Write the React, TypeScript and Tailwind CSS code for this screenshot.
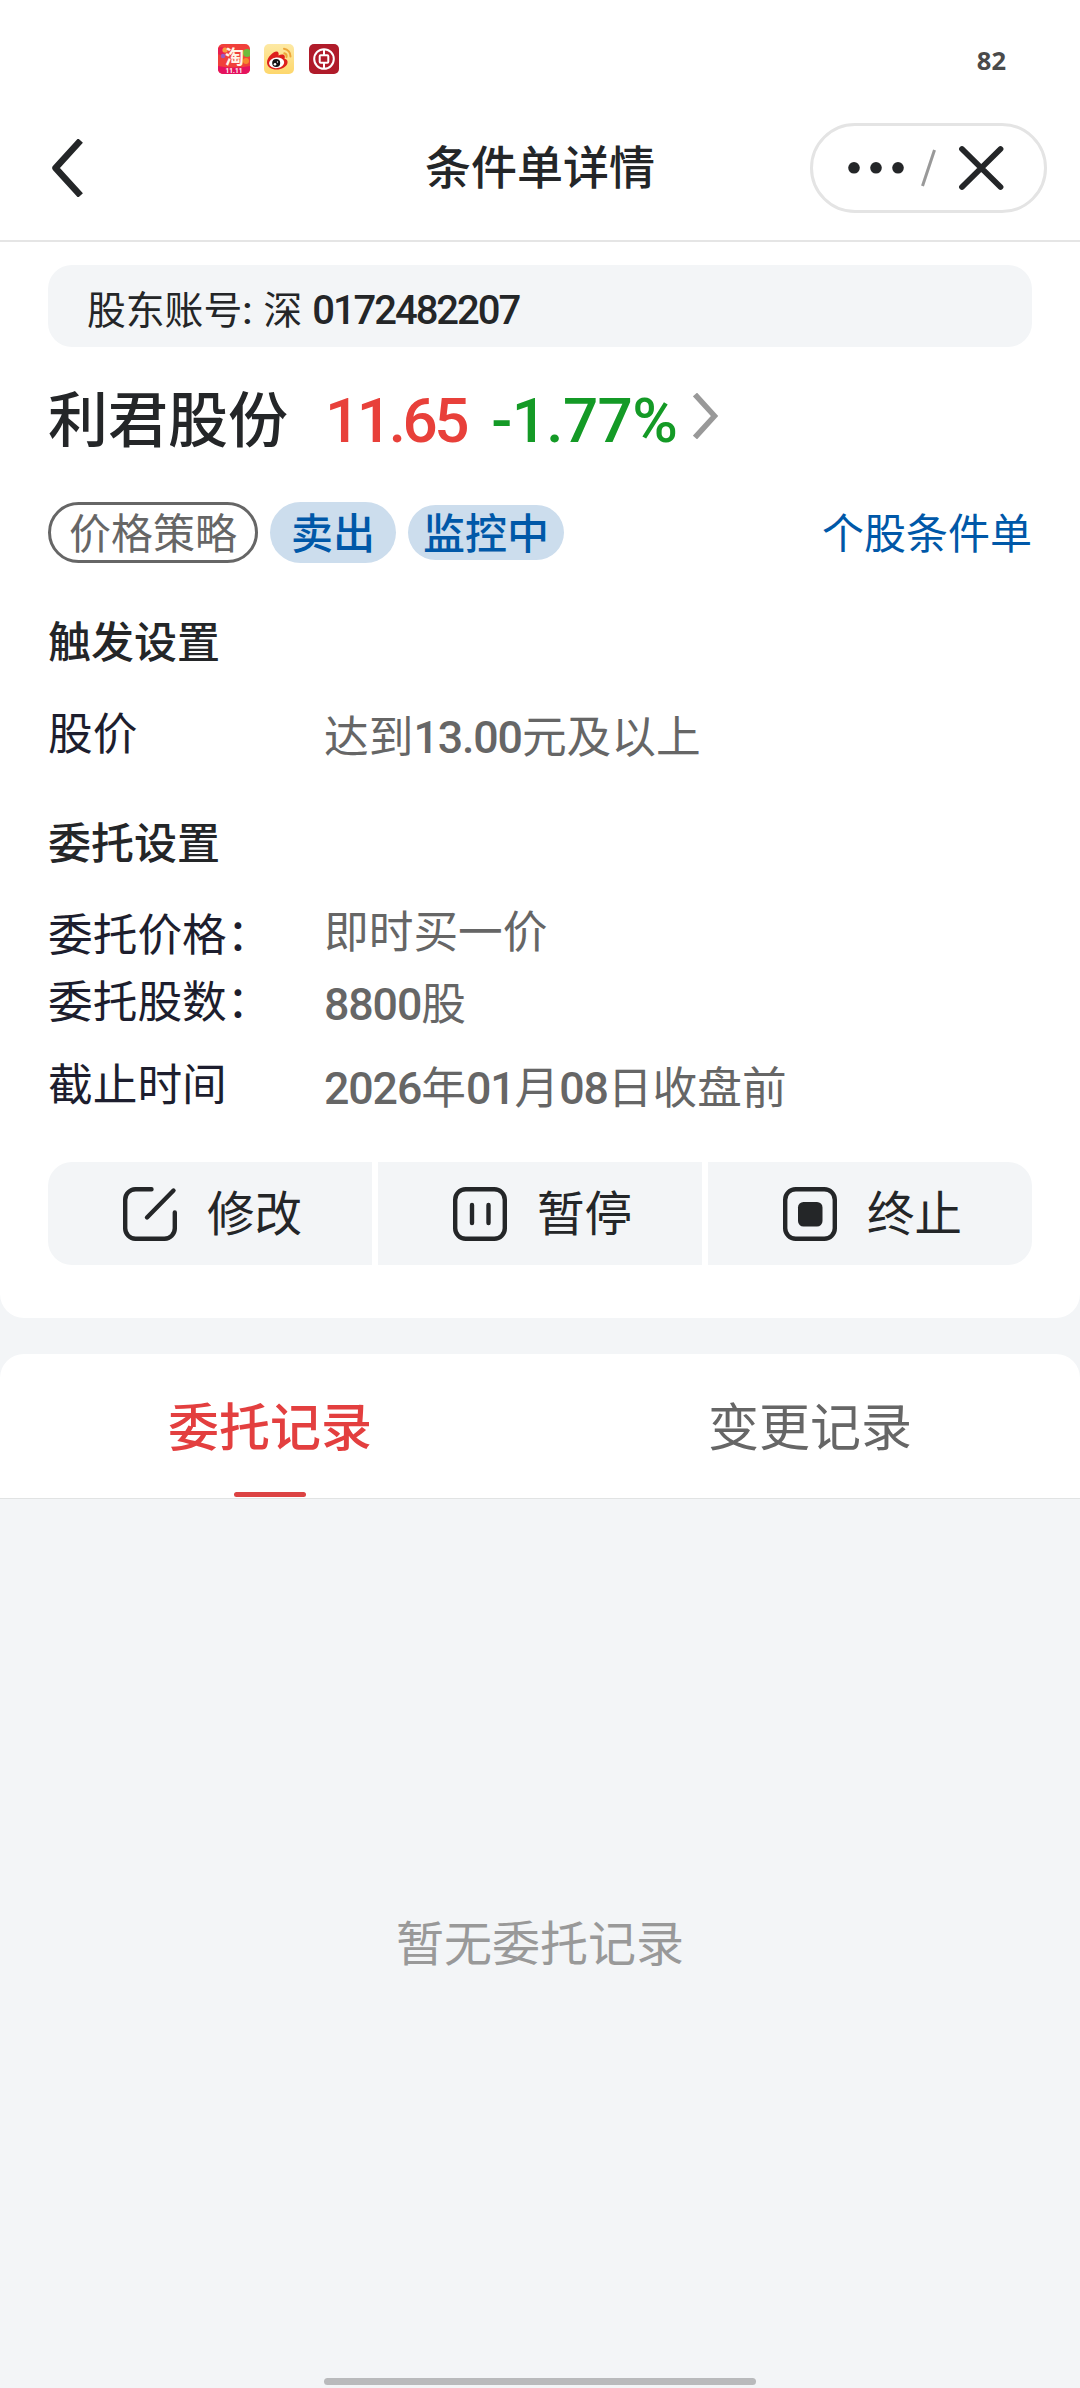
import { ReactNode } from 'react';
import clsx from 'clsx';

interface DetailRowProps {
  label: string;
  value: string;
  className?: string;
  valueClassName?: string;
}

// Digits use a narrower latin face than the surrounding Chinese text.
function MixedText({ text }: { text: string }) {
  return (
    <>
      {text.split(/([\d.]+)/).map((part, index) =>
        /^[\d.]+$/.test(part) ? (
          <span key={index} className="font-['Roboto'] font-medium leading-none tracking-[-1.1px]">{part}</span>
        ) : (
          <span key={index}>{part}</span>
        )
      )}
    </>
  );
}

function DetailRow({ label, value, className, valueClassName }: DetailRowProps) {
  return (
    <div className={clsx('flex h-[60px] text-[44.7px] leading-[60px]', className)}>
      <div className="w-[276px] shrink-0 whitespace-nowrap text-[#1d1e2e]">{label}</div>
      <div className={clsx('whitespace-nowrap text-[#666666]', valueClassName)}>
        <MixedText text={value} />
      </div>
    </div>
  );
}

function SectionTitle({ children, className }: { children: ReactNode; className?: string }) {
  return <h2 className={clsx('h-[60px] text-[43px] font-medium leading-[60px]', className)}>{children}</h2>;
}

function ActionButton({ icon, label }: { icon: ReactNode; label: string }) {
  return (
    <button className="flex flex-1 items-center gap-[30px] bg-[#f3f5f7] pl-[75px]">
      <svg viewBox="0 0 54 54" className="h-[54px] w-[54px]" fill="none" stroke="#242628" strokeWidth="4.4" strokeLinecap="round">
        {icon}
      </svg>
      <span className="pb-[6px] text-[47.5px] leading-[60px]">{label}</span>
    </button>
  );
}

function TaobaoIcon() {
  return (
    <svg viewBox="0 0 32 30" className="h-[30px] w-8 overflow-visible">
      <defs>
        <clipPath id="tb"><rect width="32" height="30" rx="5" /></clipPath>
      </defs>
      <g clipPath="url(#tb)">
        <rect width="32" height="30" fill="#f0403a" />
        <circle cx="3" cy="7" r="4" fill="#e81e50" />
        <circle cx="7" cy="6" r="2.6" fill="#f9a03c" />
        <circle cx="29" cy="9" r="4" fill="#6dbb3c" />
        <circle cx="5" cy="12" r="2.2" fill="#9a5ac0" />
        <circle cx="28" cy="17" r="3" fill="#f58a2c" />
        <path d="M0 22 Q16 25 32 22 V30 H0Z" fill="#e5125e" />
      </g>
      <text x="16.5" y="20" textAnchor="middle" fontSize="19" fontWeight="700" fill="#fff6e8" fontFamily="Noto Sans CJK SC, sans-serif">淘</text>
      <text x="16" y="29" textAnchor="middle" fontSize="6.5" fontWeight="700" fill="#fff" fontFamily="Roboto, sans-serif">11.11</text>
    </svg>
  );
}

function WeiboIcon() {
  return (
    <svg viewBox="0 0 30 30" className="h-[30px] w-[30px]">
      <defs>
        <linearGradient id="wb" x1="0" y1="0" x2="0" y2="1">
          <stop offset="0" stopColor="#fde9a4" />
          <stop offset="1" stopColor="#fdd76c" />
        </linearGradient>
      </defs>
      <rect width="30" height="30" rx="5" fill="url(#wb)" />
      <path d="M3 18.5C3 13.5 9 7.5 12.5 7.5C14.5 7.5 15 9.5 14.5 11.5C17.5 10 20.5 10.2 20.8 12.5C21 13.5 20.5 14.5 20.5 14.8C22.5 15.3 24 16.5 23.5 19C22.5 23 17.5 25.5 12.5 25.5C7.5 25.5 3 23 3 18.5Z" fill="#dd1f1c" />
      <ellipse cx="12.6" cy="18.8" rx="7.6" ry="5.3" fill="#fff" transform="rotate(-6 12.6 18.8)" />
      <circle cx="12.2" cy="19" r="4" fill="#151515" />
      <circle cx="11" cy="20.2" r="1.3" fill="#fff" />
      <circle cx="13.5" cy="18" r="0.7" fill="#fff" />
      <path d="M20.3 9.2A3.2 3.2 0 0 1 22.5 13M20 4.8A7.3 7.3 0 0 1 26.5 12.5" fill="none" stroke="#eda63a" strokeWidth="2" strokeLinecap="round" />
    </svg>
  );
}

function BankIcon() {
  return (
    <svg viewBox="0 0 30 30" className="h-[30px] w-[30px]" fill="none" stroke="#fff">
      <rect width="30" height="30" rx="5" fill="#b01b2a" stroke="none" />
      <circle cx="15" cy="15" r="9.8" strokeWidth="2" />
      <rect x="10.7" y="11.2" width="8.6" height="7.6" rx="1" strokeWidth="2" />
      <path d="M15 5.5V11M15 19V24.5" strokeWidth="2" />
    </svg>
  );
}

const tabs = [
  { name: '委托记录', active: true },
  { name: '变更记录', active: false },
];

export default function App() {
  return (
    <div className="flex h-[2388px] w-[1080px] flex-col bg-[#f3f5f7] font-['Noto_Sans_CJK_SC',sans-serif] text-[#242628]">
      <header className="h-[242px] border-b-2 border-[#e5e5e5] bg-white">
        <div className="flex h-24 items-start pl-[218px] pt-[44px]">
          <TaobaoIcon />
          <div className="ml-[14px]"><WeiboIcon /></div>
          <div className="ml-[15px]"><BankIcon /></div>
          <span className="ml-auto mr-[74px] font-['Noto_Sans'] text-[25.5px] font-bold leading-[33px] text-[#4a4a4a]">82</span>
        </div>
        <div className="grid h-36 grid-cols-3 items-center pl-[51px] pr-[33px]">
          <svg viewBox="0 0 32 58" className="h-[58px] w-8" fill="none" stroke="#242628" strokeWidth="6.5">
            <path d="M29.5 1.5L4.5 29L29.5 56.5" strokeLinejoin="round" />
          </svg>
          <h1 className="-ml-[18px] pb-[8px] text-center text-[46px] font-medium leading-[60px]">条件单详情</h1>
          <div className="h-[90px] w-[237px] justify-self-end rounded-[45px] border-[3px] border-[#e4e4e4]">
            <svg viewBox="0 0 231 84" className="h-[84px] w-[231px]" fill="none">
              <g fill="#242628">
                <circle cx="41" cy="41.8" r="5.8" />
                <circle cx="63" cy="41.8" r="5.8" />
                <circle cx="85" cy="41.8" r="5.8" />
              </g>
              <path d="M109.5 60L121.5 24" stroke="#999999" strokeWidth="3" />
              <path d="M149 23L187.5 61M187.5 23L149 61" stroke="#242628" strokeWidth="5.8" strokeLinecap="round" />
            </svg>
          </div>
        </div>
      </header>

      <main className="rounded-b-3xl bg-white px-12 pb-[53px] pt-[23px]">
        <div className="h-[82px] whitespace-nowrap rounded-3xl bg-[#f3f5f7] pl-[39px] pt-[2px] text-[38.8px] leading-[80px]">
          股东账号
          <span className="font-['Roboto'] font-medium leading-none">:</span>
          <span className="ml-[11px]">深</span>
          <span className="ml-[10px] font-['Roboto'] text-[40px] font-medium leading-none tracking-[-2.05px]">0172482207</span>
        </div>

        <div className="mt-6 flex h-[90px] items-center whitespace-nowrap">
          <div className="text-[60px] leading-[88px]">
            <span className="font-medium">利君股份</span>
            <span className="ml-[37px] font-['Roboto'] text-[62px] font-medium leading-none tracking-[-3.4px] text-[#e8403a]">11.65</span>
            <span className="ml-[25px] font-['Roboto'] text-[62px] font-medium leading-none tracking-[-0.6px] text-[#149a26]">-1.77%</span>
          </div>
          <svg viewBox="0 0 26 46" className="ml-[16px] h-[46px] w-[26px]" fill="none" stroke="#999999" strokeWidth="5.5">
            <path d="M2 1.5L21.5 23L2 44.5" />
          </svg>
        </div>

        <div className="mt-[41px] flex h-[61px] items-center gap-3 text-[42px] leading-[52px]">
          <span className="flex h-[61px] w-[210px] items-center justify-center rounded-full border-[3px] border-[#666666] pb-[3px] text-[#666666]">价格策略</span>
          <span className="flex h-[61px] w-[126px] items-center justify-center rounded-full bg-[#ccdded] pb-[3px] font-medium text-[#0058a8]">卖出</span>
          <span className="flex h-[55px] w-[156px] items-center justify-center rounded-full bg-[#ccdded] pb-[3px] font-medium text-[#0058a8]">监控中</span>
          <a className="ml-auto pb-[4px] text-[#0058a8]">个股条件单</a>
        </div>

        <SectionTitle className="mt-[46px]">触发设置</SectionTitle>
        <DetailRow className="mt-8" label="股价" value="达到13.00元及以上" valueClassName="pt-[3px]" />

        <SectionTitle className="mt-[49px]">委托设置</SectionTitle>
        <DetailRow className="mt-8" label="委托价格：" value="即时买一价" valueClassName="-mt-[3px]" />
        <DetailRow className="mt-[7px]" label="委托股数：" value="8800股" valueClassName="pt-[2px]" />
        <DetailRow className="mt-[23px]" label="截止时间" value="2026年01月08日收盘前" valueClassName="pt-[3px]" />

        <div className="mt-[50px] flex h-[103px] gap-[6px] overflow-hidden rounded-3xl">
          <ActionButton
            label="修改"
            icon={
              <>
                <path d="M28.5 2.2H13A10.5 10.5 0 0 0 2.2 13V41A10.5 10.5 0 0 0 13 51.8H41A10.5 10.5 0 0 0 51.8 41V25.5" />
                <path d="M50.5 3.5L24 30.5" />
              </>
            }
          />
          <ActionButton
            label="暂停"
            icon={
              <>
                <rect x="2.2" y="2.2" width="49.6" height="49.6" rx="10.5" />
                <path d="M19 18V36M35.5 18V36" />
              </>
            }
          />
          <ActionButton
            label="终止"
            icon={
              <>
                <rect x="2.2" y="2.2" width="49.6" height="49.6" rx="10.5" />
                <rect x="15" y="15" width="24.5" height="24.5" rx="5.5" fill="#242628" stroke="none" />
              </>
            }
          />
        </div>
      </main>

      <section className="mt-9 flex h-[145px] rounded-t-3xl border-b border-[#e1e3e3] bg-white">
        {tabs.map((tab) => (
          <div
            key={tab.name}
            className={clsx(
              'relative flex flex-1 items-center justify-center pb-[4px] text-[51px]',
              tab.active ? 'font-medium text-[#e33f3f]' : 'text-[#666666]'
            )}
          >
            {tab.name}
            {tab.active && <div className="absolute bottom-[1px] left-1/2 h-[5px] w-[72px] -translate-x-1/2 rounded-full bg-[#dc4343]" />}
          </div>
        ))}
      </section>

      <p className="mt-[411px] text-center text-[48px] leading-[60px] text-[#999999]">暂无委托记录</p>

      <div className="mx-auto mb-[3px] mt-auto h-[7px] w-[432px] rounded-full bg-[#b9babc]" />
    </div>
  );
}
